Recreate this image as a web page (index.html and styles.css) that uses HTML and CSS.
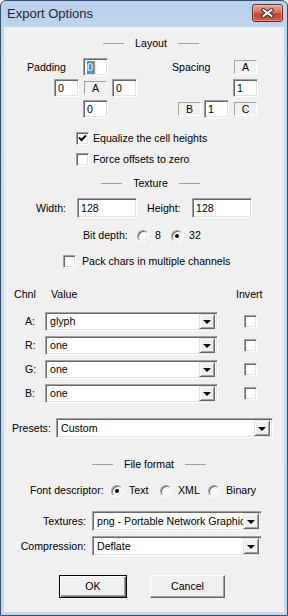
FILE: index.html
```html
<!DOCTYPE html>
<html lang="en">

<head>
    <meta charset="UTF-8">
    <meta name="viewport" content="width=device-width, initial-scale=1.0">
    <title>Export Options</title>
    <link rel="stylesheet" href="styles.css">
</head>

<body>
    <div class="window">
        <div class="titlebar">
            <span class="title">Export Options</span>
            <span class="close-btn">
                <svg width="13" height="10" viewBox="0 0 13 10">
                    <path d="M2.5 2 L10.5 8 M10.5 2 L2.5 8" stroke="#3b2a28" stroke-width="4" stroke-linecap="square" />
                    <path d="M2.5 2 L10.5 8 M10.5 2 L2.5 8" stroke="#fff" stroke-width="2" stroke-linecap="square" />
                </svg>
            </span>
        </div>

        <div class="client">
            <!-- Layout -->
            <div class="sep sep-layout"><i></i><span>Layout</span><i></i></div>

            <div class="layout-row">
                <div class="pad-grid">
                    <span class="grid-label">Padding</span>
                    <span class="edit pad-top"><span class="sel">0</span></span>
                    <span class="edit pad-left">0</span>
                    <span class="tag pad-a">A</span>
                    <span class="edit pad-right">0</span>
                    <span class="edit pad-bottom">0</span>
                </div>
                <div class="spc-grid">
                    <span class="grid-label spc-label">Spacing</span>
                    <span class="tag spc-a">A</span>
                    <span class="edit spc-top">1</span>
                    <span class="tag spc-b">B</span>
                    <span class="edit spc-mid">1</span>
                    <span class="tag spc-c">C</span>
                </div>
            </div>

            <div class="check-row row-equalize">
                <span class="check">
                    <svg width="9" height="9" viewBox="0 0 9 9">
                        <path d="M1 3.5 L3.5 6 L8 1.5" fill="none" stroke="#000" stroke-width="2" />
                    </svg>
                </span>
                <span>Equalize the cell heights</span>
            </div>
            <div class="check-row row-force">
                <span class="check"></span>
                <span>Force offsets to zero</span>
            </div>

            <!-- Texture -->
            <div class="sep sep-texture"><i></i><span>Texture</span><i></i></div>

            <div class="size-row">
                <span class="lbl-w">Width:</span>
                <span class="edit size-edit">128</span>
                <span class="lbl-h">Height:</span>
                <span class="edit size-edit">128</span>
            </div>

            <div class="depth-row">
                <span class="depth-lbl">Bit depth:</span>
                <span class="radio-item depth-8"><span class="radio"></span>8</span>
                <span class="radio-item"><span class="radio on"></span>32</span>
            </div>

            <div class="check-row row-pack">
                <span class="check"></span>
                <span>Pack chars in multiple channels</span>
            </div>

            <!-- Channels -->
            <div class="chan-head">
                <span class="h-chnl">Chnl</span>
                <span class="h-value">Value</span>
                <span>Invert</span>
            </div>

            <div class="chan-row first">
                <span class="chan-lbl">A:</span>
                <span class="combo chan-combo"><span class="combo-text">glyph</span><span class="arrow-btn"><b></b></span></span>
                <span class="check chan-check"></span>
            </div>
            <div class="chan-row">
                <span class="chan-lbl">R:</span>
                <span class="combo chan-combo"><span class="combo-text">one</span><span class="arrow-btn"><b></b></span></span>
                <span class="check chan-check"></span>
            </div>
            <div class="chan-row">
                <span class="chan-lbl">G:</span>
                <span class="combo chan-combo"><span class="combo-text">one</span><span class="arrow-btn"><b></b></span></span>
                <span class="check chan-check"></span>
            </div>
            <div class="chan-row">
                <span class="chan-lbl">B:</span>
                <span class="combo chan-combo"><span class="combo-text">one</span><span class="arrow-btn"><b></b></span></span>
                <span class="check chan-check"></span>
            </div>

            <div class="presets-row">
                <span class="presets-lbl">Presets:</span>
                <span class="combo presets-combo"><span class="combo-text">Custom</span><span class="arrow-btn"><b></b></span></span>
            </div>

            <!-- File format -->
            <div class="sep sep-format"><i></i><span>File format</span><i></i></div>

            <div class="format-row">
                <span class="format-lbl">Font descriptor:</span>
                <span class="radio-item fmt-text"><span class="radio on"></span>Text</span>
                <span class="radio-item fmt-xml"><span class="radio"></span>XML</span>
                <span class="radio-item"><span class="radio"></span>Binary</span>
            </div>

            <div class="file-row row-textures">
                <span class="file-lbl">Textures:</span>
                <span class="combo file-combo"><span class="combo-text">png - Portable Network Graphics</span><span class="arrow-btn"><b></b></span></span>
            </div>
            <div class="file-row row-compression">
                <span class="file-lbl">Compression:</span>
                <span class="combo file-combo"><span class="combo-text">Deflate</span><span class="arrow-btn"><b></b></span></span>
            </div>

            <div class="buttons">
                <span class="btn btn-default">OK</span>
                <span class="btn btn-cancel">Cancel</span>
            </div>
        </div>
    </div>
</body>

</html>
```

FILE: styles.css
```css
* {
    padding: 0;
    margin: 0;
    box-sizing: border-box;
}

body {
    width: 288px;
    height: 616px;
    background: #fff;
    font: 10.6px "Liberation Sans", Arial, sans-serif;
    color: #000;
}

.window {
    width: 288px;
    height: 616px;
    border: 1px solid #34506e;
    border-radius: 6px 6px 0 0;
    background: linear-gradient(#b9d0ea, #c6daf0 60px, #c4d9ef);
    padding: 0 3px 3px;
    display: flex;
    flex-direction: column;
}

/* title bar */
.titlebar {
    height: 26px;
    display: flex;
    justify-content: space-between;
    align-items: flex-start;
}

.title {
    font-size: 13px;
    line-height: 16px;
    color: #1e2541;
    padding: 5px 0 0 3px;
}

.close-btn {
    width: 31px;
    height: 18px;
    margin-top: 3px;
    margin-right: 1px;
    border: 1px solid #6b2a22;
    border-radius: 3px;
    background: linear-gradient(#e9a898, #d8705f 45%, #c4402c 55%, #d0614c);
    box-shadow: inset 0 0 0 1px rgba(255, 255, 255, 0.35);
    display: flex;
    align-items: center;
    justify-content: center;
}

.client {
    flex: 1;
    background: #f0f0f0;
    line-height: 13px;
}

/* separators */
.sep {
    display: flex;
    align-items: center;
    justify-content: center;
    height: 13px;
}

.sep i {
    width: 21px;
    height: 1px;
    background: #a0a0a0;
    margin: 0 11px;
}

.sep-layout {
    margin-top: 10px;
    padding-left: 14px;
}

.sep-texture {
    margin-top: 11px;
    padding-left: 13px;
}

.sep-format {
    margin-top: 20px;
    padding-left: 10px;
}

/* classic 3D controls */
.edit {
    display: block;
    height: 18px;
    background: #fff;
    border: 1px solid;
    border-color: #a0a0a0 #fff #fff #a0a0a0;
    box-shadow: inset 1px 1px #696969, inset -1px -1px #e3e3e3;
    padding: 2px 0 0 3px;
    line-height: 13px;
}

.sel {
    display: inline-block;
    background: #3399ff;
    color: #fff;
    border-right: 1px solid #e07b39;
    padding-right: 1px;
}

.tag {
    display: block;
    width: 23px;
    height: 14px;
    border: 1px solid;
    border-color: #a0a0a0 #fff #fff #a0a0a0;
    text-align: center;
    line-height: 12px;
}

.check {
    display: flex;
    align-items: center;
    justify-content: center;
    width: 13px;
    height: 13px;
    flex-shrink: 0;
    background: #fff;
    border: 1px solid;
    border-color: #a0a0a0 #fff #fff #a0a0a0;
    box-shadow: inset 1px 1px #696969, inset -1px -1px #e3e3e3;
}

.radio {
    position: relative;
    width: 12px;
    height: 12px;
    flex-shrink: 0;
    border-radius: 50%;
    background: #fff;
    border: 1px solid;
    border-color: #a0a0a0 #fff #fff #a0a0a0;
    box-shadow: inset 1px 1px #696969, inset -1px -1px #e3e3e3;
}

.radio.on::after {
    content: "";
    position: absolute;
    left: 3px;
    top: 3px;
    width: 4px;
    height: 4px;
    border-radius: 50%;
    background: #000;
}

.radio-item {
    display: flex;
    align-items: center;
    gap: 6px;
}

.combo {
    display: flex;
    align-items: center;
    justify-content: space-between;
    height: 20px;
    background: #fff;
    border: 1px solid;
    border-color: #a0a0a0 #fff #fff #a0a0a0;
    box-shadow: inset 1px 1px #696969, inset -1px -1px #e3e3e3;
    padding: 2px 2px 2px 4px;
}

.combo-text {
    flex: 1;
    white-space: nowrap;
    overflow: hidden;
}

.arrow-btn {
    width: 16px;
    height: 16px;
    flex-shrink: 0;
    background: #f0f0f0;
    border: 1px solid;
    border-color: #e3e3e3 #696969 #696969 #e3e3e3;
    box-shadow: inset 1px 1px #fff, inset -1px -1px #a0a0a0;
    display: flex;
    align-items: center;
    justify-content: center;
}

.arrow-btn b {
    width: 0;
    height: 0;
    border-left: 4px solid transparent;
    border-right: 4px solid transparent;
    border-top: 4px solid #000;
    margin-top: 1px;
}

/* layout block */
.layout-row {
    display: flex;
    margin-top: 8px;
    padding-left: 23px;
}

.pad-grid {
    display: grid;
    grid-template-columns: 27px 25px 4px 25px 4px 25px;
    grid-template-rows: 18px 18px 18px;
    row-gap: 3px;
    align-items: center;
}

.grid-label {
    grid-row: 1;
    grid-column: 1 / 3;
}

.pad-top {
    grid-row: 1;
    grid-column: 4;
}

.pad-left {
    grid-row: 2;
    grid-column: 2;
}

.pad-a {
    grid-row: 2;
    grid-column: 4;
    justify-self: center;
}

.pad-right {
    grid-row: 2;
    grid-column: 6;
}

.pad-bottom {
    grid-row: 3;
    grid-column: 4;
}

.spc-grid {
    margin-left: 34px;
    display: grid;
    grid-template-columns: 7px 23px 3px 25px 4px 25px;
    grid-template-rows: 18px 18px 18px;
    row-gap: 3px;
    align-items: center;
}

.spc-label {
    grid-column: 1 / 5;
    margin-left: 1px;
}

.spc-a {
    grid-row: 1;
    grid-column: 6;
    justify-self: center;
}

.spc-top {
    grid-row: 2;
    grid-column: 6;
}

.spc-b {
    grid-row: 3;
    grid-column: 2;
}

.spc-mid {
    grid-row: 3;
    grid-column: 4;
}

.spc-c {
    grid-row: 3;
    grid-column: 6;
    justify-self: center;
}

.check-row {
    display: flex;
    align-items: center;
    height: 13px;
    gap: 4px;
}

.row-equalize {
    margin-top: 14px;
    padding-left: 72px;
}

.row-force {
    margin-top: 8px;
    padding-left: 72px;
}

/* texture block */
.size-row {
    display: flex;
    align-items: center;
    height: 20px;
    margin-top: 8px;
    padding-left: 32px;
}

.lbl-w {
    width: 41px;
}

.lbl-h {
    width: 45px;
    margin-left: 10px;
}

.size-edit {
    width: 60px;
    height: 20px;
    padding-top: 3px;
}

.depth-row {
    display: flex;
    align-items: center;
    height: 13px;
    margin-top: 11px;
    padding-left: 79px;
}

.depth-lbl {
    width: 54px;
}

.depth-8 {
    width: 34px;
}

.row-pack {
    margin-top: 13px;
    padding-left: 59px;
    gap: 6px;
}

/* channels */
.chan-head {
    display: flex;
    align-items: center;
    height: 13px;
    margin-top: 20px;
    padding-left: 10px;
}

.h-chnl {
    width: 37px;
}

.h-value {
    width: 185px;
}

.chan-row {
    display: flex;
    align-items: center;
    height: 19px;
    margin-top: 5px;
    padding-left: 21px;
}

.chan-row.first {
    margin-top: 11px;
}

.chan-lbl {
    width: 20px;
}

.chan-combo {
    width: 173px;
    height: 19px;
}

.chan-combo .arrow-btn {
    height: 15px;
}

.chan-check {
    margin-left: 26px;
}

.presets-row {
    display: flex;
    align-items: center;
    margin-top: 15px;
    padding-left: 8px;
}

.presets-lbl {
    width: 44px;
}

.presets-combo {
    width: 217px;
}

/* file format */
.format-row {
    display: flex;
    align-items: center;
    height: 13px;
    margin-top: 13px;
    padding-left: 26px;
}

.format-lbl {
    width: 81px;
}

.fmt-text {
    width: 49px;
}

.fmt-xml {
    width: 48px;
}

.file-row {
    display: flex;
    align-items: center;
    height: 20px;
}

.row-textures {
    margin-top: 14px;
}

.row-compression {
    margin-top: 5px;
}

.file-lbl {
    width: 82px;
    text-align: right;
}

.file-combo {
    width: 170px;
    margin-left: 6px;
}

/* buttons */
.buttons {
    display: flex;
    gap: 23px;
    margin-top: 19px;
    padding-left: 55px;
}

.btn {
    display: flex;
    align-items: center;
    justify-content: center;
    height: 23px;
    background: #f0f0f0;
    border: 1px solid;
    border-color: #fff #696969 #696969 #fff;
    box-shadow: inset -1px -1px #a0a0a0;
}

.btn-default {
    width: 68px;
    border-color: #000;
    box-shadow: inset 1px 1px #fff, inset -1px -1px #696969, inset -2px -2px #a0a0a0;
}

.btn-cancel {
    width: 75px;
}
```
